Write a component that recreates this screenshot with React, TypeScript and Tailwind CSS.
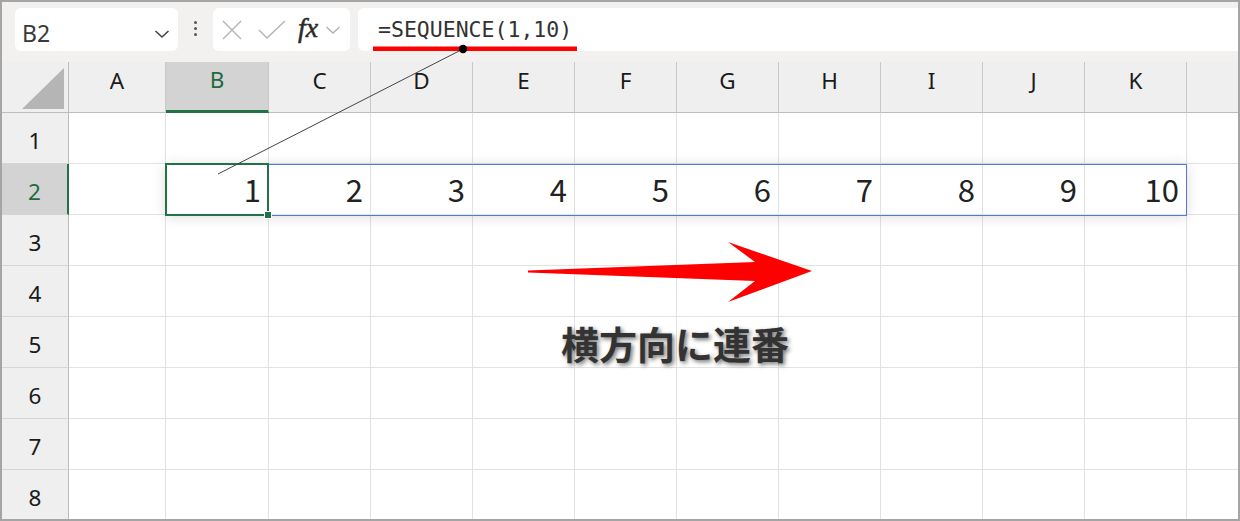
import React from "react";

const COLS: { l: string; w: string }[] = [
  { l: "A", w: "w-[97px]" },
  { l: "B", w: "w-[103px]" },
  { l: "C", w: "w-[102px]" },
  { l: "D", w: "w-[102px]" },
  { l: "E", w: "w-[102px]" },
  { l: "F", w: "w-[102px]" },
  { l: "G", w: "w-[102px]" },
  { l: "H", w: "w-[102px]" },
  { l: "I", w: "w-[102px]" },
  { l: "J", w: "w-[102px]" },
  { l: "K", w: "w-[102px]" },
  { l: "", w: "w-[51px]" },
];

const UI = { fontFamily: '"Noto Sans", "Open Sans", sans-serif' };
const NUM = { fontFamily: '"Noto Sans CJK JP", "Noto Sans", sans-serif' };

function TopBar() {
  return (
    <div className="h-[60px] shrink-0 bg-[#f2f1f0] flex items-start pt-[6px] pl-[13px]">
      {/* Name box */}
      <div className="w-[163px] h-[43px] shrink-0 rounded-[6px] bg-white flex items-center justify-between pl-[7px] pr-[8px] pt-[8px]">
        <span className="text-[23px] leading-none text-[#3a3a3a]" style={UI}>
          B2
        </span>
        <svg width="16" height="10" viewBox="0 0 16 10">
          <path d="M1.5 2 L8 8 L14.5 2" fill="none" stroke="#444" strokeWidth="1.6" />
        </svg>
      </div>
      {/* dots */}
      <div className="w-[35px] h-[43px] shrink-0 flex flex-col items-center justify-center gap-[3px] pb-[2px]">
        <span className="w-[3px] h-[3px] rounded-full bg-[#555]" />
        <span className="w-[3px] h-[3px] rounded-full bg-[#555]" />
        <span className="w-[3px] h-[3px] rounded-full bg-[#555]" />
      </div>
      {/* X / check / fx box */}
      <div className="w-[137px] h-[43px] shrink-0 rounded-[6px] bg-white flex items-center pl-[9px]">
        <svg width="20" height="20" viewBox="0 0 20 20" className="shrink-0">
          <path d="M1 1 L19 19 M19 1 L1 19" stroke="#b4b4b4" strokeWidth="1.4" fill="none" />
        </svg>
        <svg width="28" height="20" viewBox="0 0 28 20" className="ml-[16px] shrink-0">
          <path d="M1 10 L9 18 L27 1" stroke="#b4b4b4" strokeWidth="1.4" fill="none" />
        </svg>
        <span
          className="ml-[12px] text-[28px] leading-none italic text-[#2a2a2a] pb-[3px] [-webkit-text-stroke:0.5px_#2a2a2a]"
          style={{ fontFamily: '"Liberation Serif", "DejaVu Serif", serif' }}
        >
          fx
        </span>
        <svg width="16" height="10" viewBox="0 0 16 10" className="ml-[7px] shrink-0">
          <path d="M1.5 2 L8 8 L14.5 2" fill="none" stroke="#b0b0b0" strokeWidth="1.3" />
        </svg>
      </div>
      {/* formula box */}
      <div className="ml-[8px] flex-1 h-[43px] rounded-l-[6px] bg-white flex items-center pl-[20px]">
        <span
          className="text-[21.5px] leading-none text-[#333]"
          style={{ fontFamily: '"DejaVu Sans Mono", "Liberation Mono", monospace' }}
        >
          =SEQUENCE(1,10)
        </span>
      </div>
    </div>
  );
}

function HeaderRow() {
  return (
    <div className="flex h-[51px] shrink-0 bg-[#efefef]">
      <div className="w-[67px] shrink-0 h-full border-r border-b border-[#bdbdbd] relative">
        <svg width="66" height="50" viewBox="0 0 66 50" className="absolute left-0 top-0">
          <polygon points="62,6 20,47 62,47" fill="#b5b5b5" />
        </svg>
      </div>
      {COLS.map((c) => {
        const sel = c.l === "B";
        return (
          <div
            key={c.w + c.l}
            className={
              "shrink-0 h-full flex items-center justify-center pb-[12px] text-[22.5px] leading-none " +
              c.w +
              (c.l === "" ? " border-b border-[#bdbdbd]" : " border-r border-r-[#c8c8c8]") +
              (sel
                ? " bg-[#d3d3d3] text-[#1d6b41] border-b-[3px] border-b-[#217346]"
                : c.l !== ""
                ? " text-[#1a1a1a] border-b border-b-[#bdbdbd]"
                : "")
            }
            style={UI}
          >
            {c.l}
          </div>
        );
      })}
    </div>
  );
}

function Row({ n }: { n: number }) {
  const sel = n === 2;
  return (
    <div className="flex h-[51px] shrink-0">
      <div
        className={
          "w-[67px] shrink-0 h-full flex items-center justify-center pt-[6px] text-[22.5px] leading-none border-b border-b-[#d6d6d6] " +
          (sel
            ? "bg-[#d3d3d3] text-[#1d6b41] border-r-2 border-r-[#217346]"
            : "bg-[#efefef] text-[#1a1a1a] border-r border-r-[#bdbdbd]")
        }
        style={UI}
      >
        {n}
      </div>
      {COLS.map((c, i) => {
        const val = sel && i >= 1 && i <= 10 ? i : null;
        return (
          <div
            key={c.w + c.l + i}
            className={
              "shrink-0 h-full border-b border-[#e2e2e2] flex items-center justify-end pr-[7px] pb-[1px] text-[31px] leading-none text-[#222] " +
              c.w +
              (c.l === "" ? "" : " border-r")
            }
            style={NUM}
          >
            {val}
          </div>
        );
      })}
    </div>
  );
}

export default function App() {
  return (
    <div className="w-[1240px] h-[521px] border-2 border-[#a5a5a5] bg-white relative overflow-hidden flex flex-col">
      <TopBar />
      <HeaderRow />
      {[1, 2, 3, 4, 5, 6, 7, 8].map((n) => (
        <Row key={n} n={n} />
      ))}

      {/* overlays in page coordinates */}
      <div className="absolute left-[-2px] top-[-2px] w-[1240px] h-[521px] pointer-events-none">
        <div className="absolute left-[165px] top-[164px] w-[1022px] h-[52px] shadow-[0_1px_12px_rgba(0,0,0,0.14)]" />
        <div className="absolute left-[268px] top-[164px] w-[919px] h-[52px] border border-[#4f7bd0]" />
        <div className="absolute left-[165px] top-[163px] w-[104px] h-[53px] border-2 border-[#217346]" />
        <div className="absolute left-[264px] top-[211px] w-[8px] h-[8px] bg-[#217346] border border-white" />

        <svg width="1240" height="521" viewBox="0 0 1240 521" className="absolute left-0 top-0">
          <rect x="373" y="46.5" width="204" height="4.5" fill="#ff0000" />
          <line x1="463" y1="49" x2="218" y2="174" stroke="#444" strokeWidth="1" />
          <circle cx="463" cy="49" r="4.2" fill="#000" />
          <polygon
            points="528,270.5 755,262 728,242 812,271 728,302 755,281 528,272.5"
            fill="#ff0000"
          />
        </svg>

        <div
          className="absolute left-[561px] top-[324px] text-[38px] leading-none font-bold text-[#333] [text-shadow:2px_2px_4px_rgba(0,0,0,0.55),0_0_2px_rgba(255,255,255,0.9)]"
          style={{ fontFamily: '"Noto Sans CJK JP", "Noto Sans", sans-serif' }}
        >
          横方向に連番
        </div>
      </div>
    </div>
  );
}
